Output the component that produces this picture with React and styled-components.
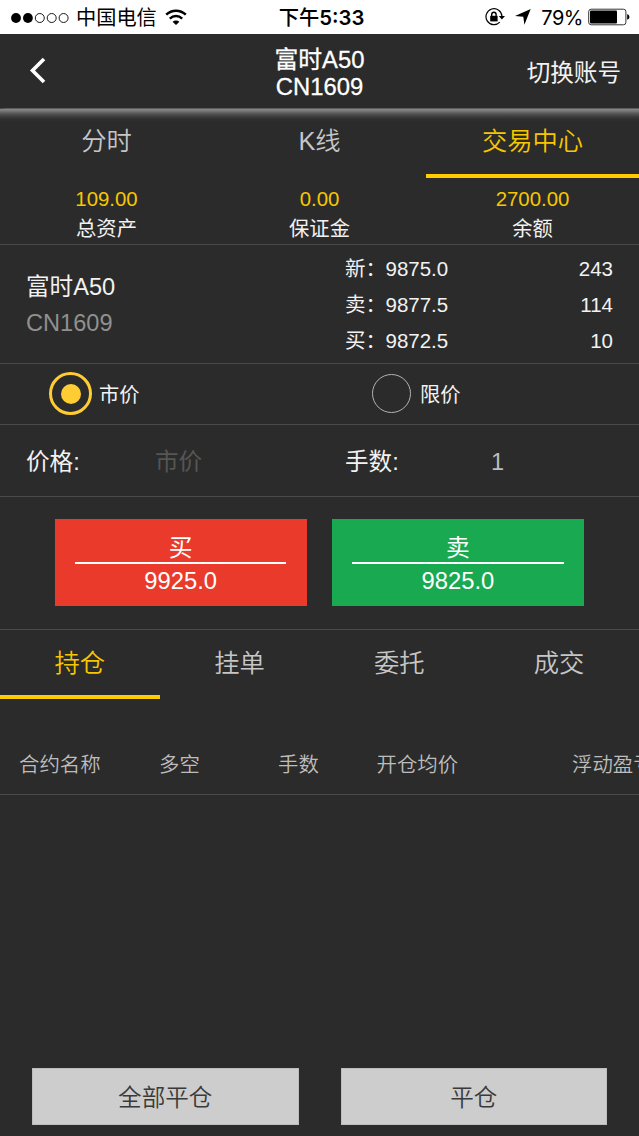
import React from "react";
import styled, { createGlobalStyle } from "styled-components";

const Global = createGlobalStyle`
  * { box-sizing: border-box; }
  body {
    margin: 0;
    background: #2b2b2b;
    font-family: "Liberation Sans", "Noto Sans CJK SC", sans-serif;
    overflow: hidden;
  }
  button { font-family: inherit; border: 0; padding: 0; border-radius: 0; }
`;

const Screen = styled.main`
  width: 639px;
  height: 1136px;
  display: flex;
  flex-direction: column;
  overflow: hidden;
  background: #2b2b2b;
  color: #f2f2f2;
`;

const StatusBar = styled.div`
  height: 34px;
  flex: none;
  display: grid;
  grid-template-columns: 1fr auto 1fr;
  align-items: center;
  padding: 0 9px 0 10px;
  background: #fff;
  color: #000;
  font: 20.2px/32px Inter, "Noto Sans CJK SC", sans-serif;
`;
const StatusGroup = styled.div`
  display: flex;
  align-items: center;
  height: 34px;
  justify-content: ${(p) => (p.$end ? "flex-end" : "flex-start")};
`;
const Carrier = styled.span`
  padding-top: 2px;
  margin: 0 8px 0 6px;
`;
const Clock = styled.span`
  padding-top: 2px;
  font-weight: 600;
  font-size: 20.3px;
  margin-left: 3px;
  white-space: nowrap;
`;
const Cjk = styled.span`
  font-weight: 500;
`;
const Location = styled.span`
  display: flex;
  margin: 0 10px 0 9px;
`;
const Percent = styled.span`
  padding-top: 2px;
  font-size: 20px;
  letter-spacing: -0.5px;
  margin-right: 5px;
`;

const Header = styled.header`
  height: 74px;
  flex: none;
  display: grid;
  grid-template-columns: 1fr auto 1fr;
  align-items: center;
  padding: 2px 18px 0 29px;
`;
const BackButton = styled.button`
  width: 18px;
  height: 28px;
  margin-top: -2px;
  background: none;
  display: flex;
`;
const Title = styled.h1`
  margin: 1px 0 0 -11px;
  font-size: 23.8px;
  line-height: 27px;
  font-weight: 400;
  text-align: center;
  color: #fff;
  -webkit-text-stroke: 0.3px #fff;
`;
const SwitchAccount = styled.span`
  justify-self: end;
  padding-top: 2px;
  font-size: 23.6px;
  line-height: 28px;
`;

const TabBar = styled.nav`
  height: ${(p) => p.$height}px;
  flex: none;
  display: flex;
  ${(p) =>
    p.$shaded &&
    `background: radial-gradient(ellipse at 0 0, #2b2b2b 0, transparent 8px),
      linear-gradient(#4a4a4a 0, #858585 1.5px, #777 3px, #5c5c5c 5px, #404040 8px, #303030 11px, #2b2b2b 14px);`}
`;
const Tab = styled.button`
  flex: 1;
  background: none;
  color: ${(p) => (p.$active ? "#f7c600" : "#c6c6c6")};
  border-bottom: ${(p) => (p.$active ? "#ffcc00" : "transparent")} solid 4px;
  font-size: 25.3px;
  line-height: 66px;
  height: 100%;
  font-weight: 350;
`;

const Assets = styled.section`
  height: 67px;
  flex: none;
  display: flex;
  padding-top: 7px;
  text-align: center;
  border-bottom: 1px solid #4b4b4b;
`;
const Asset = styled.div`
  flex: 1;
  font-size: 20.3px;
`;
const AssetValue = styled.div`
  color: #f7c600;
  line-height: 28px;
  font-size: 20.4px;
`;
const AssetLabel = styled.div`
  line-height: 33px;
`;

const Quote = styled.section`
  height: 119px;
  flex: none;
  display: flex;
  border-bottom: 1px solid #4b4b4b;
`;
const Contract = styled.div`
  width: 345px;
  padding: 24px 0 0 26px;
  font-size: 23.6px;
  line-height: 36px;
`;
const Code = styled.div`
  color: #909090;
`;
const Prices = styled.div`
  flex: 1;
  padding: 6px 26px 0 0;
  font-size: 20.5px;
  line-height: 36px;
`;
const PriceRow = styled.div`
  display: grid;
  grid-template-columns: 40.5px 1fr auto;
`;

const Options = styled.section`
  height: 61px;
  flex: none;
  display: flex;
  border-bottom: 1px solid #4b4b4b;
`;
const Option = styled.label`
  width: ${(p) => p.$width}px;
  display: flex;
  align-items: center;
  gap: ${(p) => p.$gap}px;
  padding: 0 0 1px 49px;
  font-size: 20.3px;
  line-height: 30px;
`;
const Radio = styled.span`
  width: ${(p) => (p.$on ? 43 : 39)}px;
  height: ${(p) => (p.$on ? 43 : 39)}px;
  border-radius: 50%;
  border: ${(p) => (p.$on ? "3px solid #ffcc33" : "1.5px solid #b2b2b2")};
  display: grid;
  place-items: center;
  &::after {
    content: "";
    width: 20px;
    height: 20px;
    border-radius: 50%;
    background: ${(p) => (p.$on ? "#ffcc33" : "transparent")};
  }
`;
const OptionText = styled.span`
  padding-top: 2px;
`;

const Fields = styled.section`
  height: 72px;
  flex: none;
  display: grid;
  grid-template-columns: 129px 190px 146px 1fr;
  padding: 0 0 0 26px;
  font-size: 23.6px;
  line-height: 75px;
  border-bottom: 1px solid #4b4b4b;
`;
const FieldValue = styled.span`
  color: ${(p) => (p.$muted ? "#565656" : "#bdbdbd")};
`;

const Trade = styled.section`
  height: 133px;
  flex: none;
  display: flex;
  gap: 25px;
  padding: 22px 0 0 54.5px;
  border-bottom: 1px solid #4b4b4b;
`;
const TradeButton = styled.button`
  width: 252.3px;
  height: 87px;
  display: flex;
  flex-direction: column;
  align-items: stretch;
  justify-content: flex-start;
  padding: 10px 20.5px 0;
  background: ${(p) => p.$color};
  color: #fff;
  font-size: 23.8px;
`;
const Side = styled.div`
  height: 35px;
  line-height: 37px;
  border-bottom: 2px solid #fff;
`;
const SidePrice = styled.div`
  line-height: 33px;
`;

const TableHead = styled.div`
  height: 96px;
  flex: none;
  display: grid;
  grid-template-columns: 140px 119px 98.5px 195.5px 110px;
  padding-left: 19px;
  font-size: 20.4px;
  line-height: 133px;
  font-weight: 350;
  color: #bdbdbd;
  white-space: nowrap;
  overflow: hidden;
  border-bottom: 1px solid #4b4b4b;
`;
const Footer = styled.footer`
  margin-top: auto;
  display: flex;
  gap: 42px;
  padding: 0 32px 11px;
`;
const CloseButton = styled.button`
  flex: 1;
  height: 57px;
  padding-top: 3px;
  background: #cdcdcd;
  color: #3a3a3a;
  border: 1px solid #bdbdbd;
  font-size: 23.6px;
  line-height: 52px;
  font-weight: 350;
`;

const SignalIcon = () => (
  <svg width="60" height="13" viewBox="0 0 60 13">
    {[0, 1, 2, 3, 4].map((i) => (
      <circle key={i} cx={6 + i * 11.9} cy="7" r={i < 2 ? 4.9 : 4.5} fill={i < 2 ? "#000" : "none"} stroke="#000" strokeWidth={i < 2 ? 0 : 0.9} />
    ))}
  </svg>
);
const WifiIcon = () => (
  <svg width="22" height="17" viewBox="0 0 22 17" fill="none" stroke="#000">
    <path d="M1.2 5.7C6.8 .4 15.2 .4 20.8 5.7" strokeWidth="2.5" />
    <path d="M4.8 9.6C8.4 6.2 13.6 6.2 17.2 9.6" strokeWidth="2.4" />
    <path d="M11 16L7.6 12.7C9.5 11 12.5 11 14.4 12.7Z" fill="#000" stroke="none" />
  </svg>
);
const LockIcon = () => (
  <svg width="21" height="18" viewBox="0 0 21 18" fill="none" stroke="#000">
    <path d="M14.8 14.2A8 8 0 1 1 17 8.4" strokeWidth="1.2" />
    <path d="M13.8 8H20L16.9 11.6Z" fill="#000" stroke="none" />
    <rect x="5.2" y="7.8" width="7.4" height="5.6" fill="#000" stroke="none" />
    <path d="M6.7 8V6.4a2.2 2.2 0 0 1 4.4 0V8" strokeWidth="1.4" />
  </svg>
);
const LocationIcon = () => (
  <svg width="16" height="16" viewBox="0 0 16 16">
    <path d="M15.7 0L9.4 15.8L8.3 7.8L0 7.1Z" />
  </svg>
);
const BatteryIcon = () => (
  <svg width="42" height="18" viewBox="0 0 42 18">
    <rect x=".7" y="1.2" width="37.2" height="15.6" rx="2.5" fill="none" stroke="#333" />
    <rect x="2" y="2.6" width="27" height="12.8" rx="1" />
    <path d="M39.2 6.3C42.1 6.8 42.1 11.2 39.2 11.7Z" />
  </svg>
);

const quotes = [
  ["新：", "9875.0", "243"],
  ["卖：", "9877.5", "114"],
  ["买：", "9872.5", "10"],
];
const assets = [
  ["109.00", "总资产"],
  ["0.00", "保证金"],
  ["2700.00", "余额"],
];

export default function App() {
  return (
    <>
      <Global />
      <Screen>
        <StatusBar>
          <StatusGroup>
            <SignalIcon />
            <Carrier>中国电信</Carrier>
            <WifiIcon />
          </StatusGroup>
          <Clock><Cjk>下午</Cjk>5:33</Clock>
          <StatusGroup $end>
            <LockIcon />
            <Location><LocationIcon /></Location>
            <Percent>79%</Percent>
            <BatteryIcon />
          </StatusGroup>
        </StatusBar>
        <Header>
          <BackButton aria-label="返回">
            <svg width="18" height="28" viewBox="0 0 18 28" fill="none" stroke="#fff" strokeWidth="3.6">
              <path d="M15 2L3.5 13.5L15 25" />
            </svg>
          </BackButton>
          <Title>富时A50<br />CN1609</Title>
          <SwitchAccount>切换账号</SwitchAccount>
        </Header>
        <TabBar $height={70} $shaded>
          <Tab>分时</Tab>
          <Tab>K线</Tab>
          <Tab $active>交易中心</Tab>
        </TabBar>
        <Assets>
          {assets.map(([value, label]) => (
            <Asset key={label}>
              <AssetValue>{value}</AssetValue>
              <AssetLabel>{label}</AssetLabel>
            </Asset>
          ))}
        </Assets>
        <Quote>
          <Contract>
            富时A50
            <Code>CN1609</Code>
          </Contract>
          <Prices>
            {quotes.map(([label, price, volume]) => (
              <PriceRow key={label}>
                <span>{label}</span>
                <span>{price}</span>
                <span>{volume}</span>
              </PriceRow>
            ))}
          </Prices>
        </Quote>
        <Options>
          <Option $width={323} $gap={7}><Radio $on /><OptionText>市价</OptionText></Option>
          <Option $width={316} $gap={9}><Radio /><OptionText>限价</OptionText></Option>
        </Options>
        <Fields>
          <span>价格:</span>
          <FieldValue $muted>市价</FieldValue>
          <span>手数:</span>
          <FieldValue>1</FieldValue>
        </Fields>
        <Trade>
          <TradeButton $color="#ea3a2c"><Side>买</Side><SidePrice>9925.0</SidePrice></TradeButton>
          <TradeButton $color="#18a951"><Side>卖</Side><SidePrice>9825.0</SidePrice></TradeButton>
        </Trade>
        <TabBar $height={69}>
          <Tab $active>持仓</Tab>
          <Tab>挂单</Tab>
          <Tab>委托</Tab>
          <Tab>成交</Tab>
        </TabBar>
        <TableHead>
          <span>合约名称</span>
          <span>多空</span>
          <span>手数</span>
          <span>开仓均价</span>
          <span>浮动盈亏</span>
        </TableHead>
        <Footer>
          <CloseButton>全部平仓</CloseButton>
          <CloseButton>平仓</CloseButton>
        </Footer>
      </Screen>
    </>
  );
}
